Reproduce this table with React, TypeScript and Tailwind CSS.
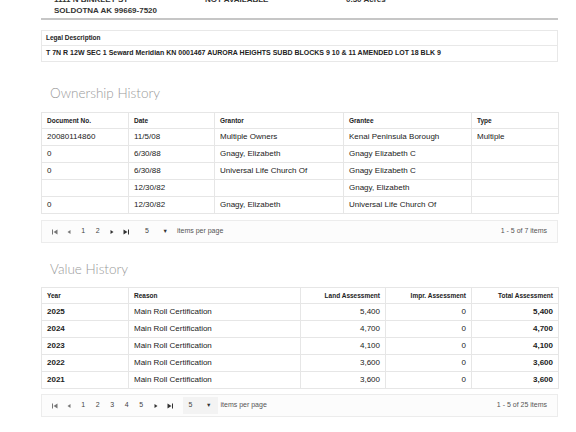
import React from 'react';

const ownership = [
  ['20080114860', '11/5/08', 'Multiple Owners', 'Kenai Peninsula Borough', 'Multiple'],
  ['0', '6/30/88', 'Gnagy, Elizabeth', 'Gnagy Elizabeth C', ''],
  ['0', '6/30/88', 'Universal Life Church Of', 'Gnagy Elizabeth C', ''],
  ['', '12/30/82', '', 'Gnagy, Elizabeth', ''],
  ['0', '12/30/82', 'Gnagy, Elizabeth', 'Universal Life Church Of', ''],
];

const values = [
  ['2025', '5,400', '0', '5,400'],
  ['2024', '4,700', '0', '4,700'],
  ['2023', '4,100', '0', '4,100'],
  ['2022', '3,600', '0', '3,600'],
  ['2021', '3,600', '0', '3,600'],
];

const FirstIcon = () => (
  <svg width="6" height="6" viewBox="0 0 6 6" className="fill-[#777]">
    <rect x="0" y="0.5" width="1" height="5" />
    <polygon points="5.5,0.5 1.5,3 5.5,5.5" />
  </svg>
);
const PrevIcon = () => (
  <svg width="6" height="6" viewBox="0 0 6 6" className="fill-[#777]">
    <polygon points="4.5,1 1.5,3 4.5,5" />
  </svg>
);
const NextIcon = () => (
  <svg width="6" height="6" viewBox="0 0 6 6" className="fill-[#333]">
    <polygon points="1.5,1 4.5,3 1.5,5" />
  </svg>
);
const LastIcon = () => (
  <svg width="6" height="6" viewBox="0 0 6 6" className="fill-[#333]">
    <polygon points="0.5,0.5 4.5,3 0.5,5.5" />
    <rect x="5" y="0.5" width="1" height="5" />
  </svg>
);

function Pager({ pages, total, selectBg }: { pages: number; total: string; selectBg?: boolean }) {
  return (
    <div className="flex h-[23px] items-center justify-between border border-[#ececec] bg-[#fcfcfc] pl-[6px] pr-[10px] text-[7px] text-[#444]">
      <div className="flex items-center">
        <span className="flex w-[14px] justify-center"><FirstIcon /></span>
        <span className="flex w-[14px] justify-center"><PrevIcon /></span>
        {Array.from({ length: pages }, (_, i) => (
          <span key={i} className="w-[14.5px] text-center">{i + 1}</span>
        ))}
        <span className="flex w-[14px] justify-center"><NextIcon /></span>
        <span className="flex w-[14px] justify-center"><LastIcon /></span>
        <span
          className={`ml-[6px] flex h-[17px] w-[35px] items-center justify-between px-[6px] ${selectBg ? 'bg-[#f3f3f3]' : ''}`}
        >
          <span>5</span>
          <span className="text-[5.5px] text-[#333]">▼</span>
        </span>
        <span className="ml-[3px] text-[#555]">items per page</span>
      </div>
      <span className="text-[#555]">{total}</span>
    </div>
  );
}

export default function App() {
  const cell = 'h-[17px] border-b border-l border-[#e6e6e6] px-[5px] align-middle';
  const head = 'h-[16px] border-b border-l border-[#e6e6e6] px-[5px] align-middle text-[6.5px] font-bold';

  return (
    <div className="h-[432px] overflow-hidden bg-white font-['Liberation_Sans',Arial,sans-serif] text-[#222]">
      <div className="ml-[41px] w-[517px]">
        {/* address block, scrolled partially out of view */}
        <div className="-mt-[6px] border-b-2 border-[#c6c6c6] pb-[1px] text-[8px] font-bold text-[#333]">
          <div className="flex h-[11px] items-center">
            <span className="w-[151px] pl-[13px]">1111 N BINKLEY ST</span>
            <span className="w-[152px] pl-[13px]">NOT AVAILABLE</span>
            <span className="pl-[2px]">0.30 Acres</span>
          </div>
          <div className="flex h-[12px] items-center">
            <span className="pl-[13px]">SOLDOTNA AK 99669-7520</span>
          </div>
        </div>

        {/* legal description */}
        <div className="mt-[10px] border border-[#e8e8e8]">
          <div className="flex h-[15px] items-center border-b border-[#e8e8e8] px-[4px] text-[6.5px] font-bold">
            Legal Description
          </div>
          <div className="flex h-[15px] items-center px-[4px] text-[7px] font-bold">
            T 7N R 12W SEC 1 Seward Meridian KN 0001467 AURORA HEIGHTS SUBD BLOCKS 9 10 &amp; 11 AMENDED LOT 18 BLK 9
          </div>
        </div>

        {/* ownership history */}
        <div className="mt-[24px] flex h-[15px] items-center pl-[9px] font-['Lato',sans-serif] text-[13.5px] font-light text-[#999]">
          Ownership History
        </div>
        <table className="mt-[11px] w-full table-fixed border-collapse border-r border-t border-[#e6e6e6] text-[8px]">
          <colgroup>
            <col className="w-[87px]" />
            <col className="w-[86px]" />
            <col className="w-[129px]" />
            <col className="w-[128px]" />
            <col className="w-[87px]" />
          </colgroup>
          <thead>
            <tr className="text-left">
              <th className={head}>Document No.</th>
              <th className={head}>Date</th>
              <th className={head}>Grantor</th>
              <th className={head}>Grantee</th>
              <th className={head}>Type</th>
            </tr>
          </thead>
          <tbody>
            {ownership.map((r, i) => (
              <tr key={i}>
                {r.map((c, j) => (
                  <td key={j} className={cell}>{c}</td>
                ))}
              </tr>
            ))}
          </tbody>
        </table>
        <div className="mt-[6px]">
          <Pager pages={2} total="1 - 5 of 7 items" />
        </div>

        {/* value history */}
        <div className="mt-[19px] flex h-[14px] items-center pl-[9px] font-['Lato',sans-serif] text-[13.5px] font-light text-[#999]">
          Value History
        </div>
        <table className="mt-[11px] w-full table-fixed border-collapse border-r border-t border-[#e6e6e6] text-[8px]">
          <colgroup>
            <col className="w-[87px]" />
            <col className="w-[172px]" />
            <col className="w-[85px]" />
            <col className="w-[86px]" />
            <col className="w-[87px]" />
          </colgroup>
          <thead>
            <tr>
              <th className={`${head} text-left`}>Year</th>
              <th className={`${head} text-left`}>Reason</th>
              <th className={`${head} text-right`}>Land Assessment</th>
              <th className={`${head} text-right`}>Impr. Assessment</th>
              <th className={`${head} text-right`}>Total Assessment</th>
            </tr>
          </thead>
          <tbody>
            {values.map((r) => (
              <tr key={r[0]}>
                <td className={`${cell} font-bold`}>{r[0]}</td>
                <td className={cell}>Main Roll Certification</td>
                <td className={`${cell} text-right`}>{r[1]}</td>
                <td className={`${cell} text-right`}>{r[2]}</td>
                <td className={`${cell} text-right font-bold`}>{r[3]}</td>
              </tr>
            ))}
          </tbody>
        </table>
        <div className="mt-[5px]">
          <Pager pages={5} total="1 - 5 of 25 items" selectBg />
        </div>
      </div>
    </div>
  );
}
